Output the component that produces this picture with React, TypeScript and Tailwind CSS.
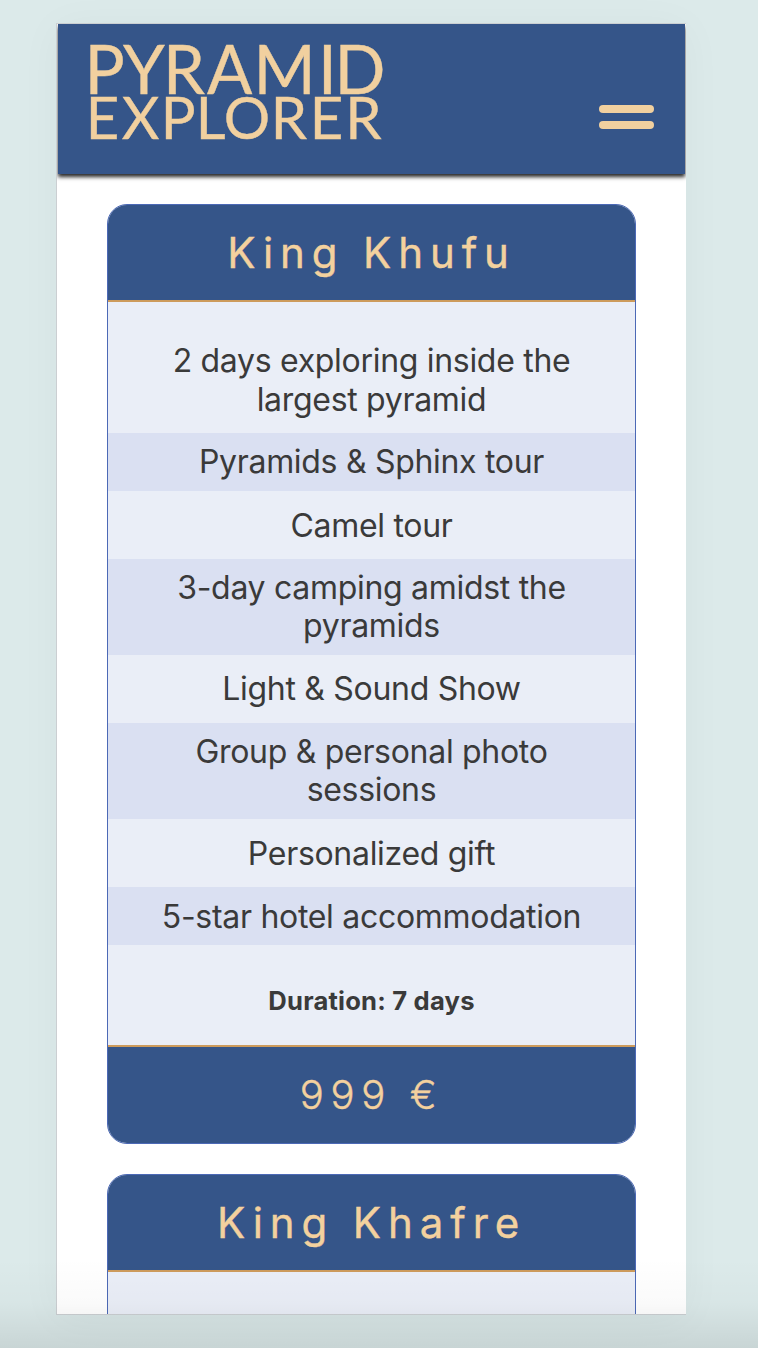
const pyramid: [string, number][] = [
  ['P', 32.5], ['Y', 71], ['R', 111], ['A', 155], ['M', 201.5], ['I', 266], ['D', 282.5],
];
const explorer: [string, number][] = [
  ['E', 33], ['X', 69], ['P', 108], ['L', 143], ['O', 171], ['R', 218], ['E', 257], ['R', 292.5],
];

function LogoLine({ letters, y, size }: { letters: [string, number][]; y: number; size: number }) {
  return (
    <text
      x={letters.map(([, x]) => x - size * 0.09).join(' ')}
      y={y}
      fontSize={size}
      fontFamily="Lato, sans-serif"
      fill="#f1d09f"
      stroke="#f1d09f"
      strokeWidth="0.4"
    >
      {letters.map(([c]) => c).join('')}
    </text>
  );
}

function Logo() {
  return (
    <svg width="350" height="130" viewBox="0 0 350 130" role="img">
      <LogoLine letters={pyramid} y={70} size={67} />
      <LogoLine letters={explorer} y={114.5} size={58} />
    </svg>
  );
}

function CardTitle({ children }: { children: string }) {
  return (
    <h2 className="flex h-[97px] shrink-0 items-center justify-center border-b-2 border-[#cd9b5c] bg-[#355589] pb-px text-[42px] tracking-[6.9px] text-[#f3d19e] [-webkit-text-stroke:0.4px_#f3d19e]">
      {children}
    </h2>
  );
}

const rows = [
  { lines: ['2 days exploring inside the', 'largest pyramid'], style: 'h-[131px] pt-[26px]' },
  { lines: ['Pyramids & Sphinx tour'], style: 'h-[58px] bg-[#dae0f2]' },
  { lines: ['Camel tour'], style: 'h-[68px] pt-[2px]' },
  { lines: ['3-day camping amidst the', 'pyramids'], style: 'h-[96px] bg-[#dae0f2]' },
  { lines: ['Light & Sound Show'], style: 'h-[68px]' },
  { lines: ['Group & personal photo', 'sessions'], style: 'h-[96px] bg-[#dae0f2]' },
  { lines: ['Personalized gift'], style: 'h-[68px] pt-[2px]' },
  { lines: ['5-star hotel accommodation'], style: 'h-[58px] pt-[2px] bg-[#dae0f2]' },
];

export default function App() {
  return (
    <div className="relative h-[1348px] overflow-hidden bg-[#dceaea] pt-[23px] pl-[56px] font-['Inter',sans-serif] text-[#3a3a3a]">
      <main className="flex h-[1292px] w-[630px] flex-col overflow-hidden border-t border-b border-l border-[#cbcfd2] bg-white shadow-[0_4px_40px_rgba(0,0,0,0.04)]">
        <header className="ml-px flex h-[150px] w-[627px] shrink-0 items-start justify-between bg-[#355589] shadow-[0_3px_4px_rgba(0,0,0,0.85)]">
          <Logo />
          <button aria-label="Menu" className="mt-[81px] mr-[31px] flex w-[55px] flex-col gap-[8px]">
            <span className="h-[8px] rounded-full bg-[#f1d09f]" />
            <span className="h-[8px] rounded-full bg-[#f1d09f]" />
          </button>
        </header>
        <div className="flex flex-col gap-[30px] pt-[30px] pl-[50px]">
          <section className="flex h-[940px] w-[529px] shrink-0 flex-col overflow-hidden rounded-[20px] border border-[#4c69b6] bg-[#eaeef7]">
            <CardTitle>King Khufu</CardTitle>
            <ul className="text-center text-[32px] leading-[38.4px] tracking-[-0.3px]">
              {rows.map((row) => (
                <li key={row.lines[0]} className={`flex flex-col justify-center ${row.style}`}>
                  {row.lines.map((line) => (
                    <span key={line}>{line}</span>
                  ))}
                </li>
              ))}
            </ul>
            <p className="flex h-[100px] shrink-0 items-center justify-center pt-[12px] text-[25.6px] font-bold tracking-[0.2px]">
              Duration: 7 days
            </p>
            <div className="flex grow items-center justify-center border-t-2 border-[#cd9b5c] bg-[#355589] text-[40px] font-light tracking-[6.6px] text-[#f3d19e] [-webkit-text-stroke:0.4px_#f3d19e]">
              999 €
            </div>
          </section>
          <section className="flex h-[940px] w-[529px] shrink-0 flex-col overflow-hidden rounded-[20px] border border-[#4c69b6] bg-[#eaeef7]">
            <CardTitle>King Khafre</CardTitle>
          </section>
        </div>
      </main>
      <div className="pointer-events-none absolute inset-x-0 bottom-0 h-[90px] bg-linear-to-b from-transparent via-black/[0.02] to-black/[0.09]" />
    </div>
  );
}
